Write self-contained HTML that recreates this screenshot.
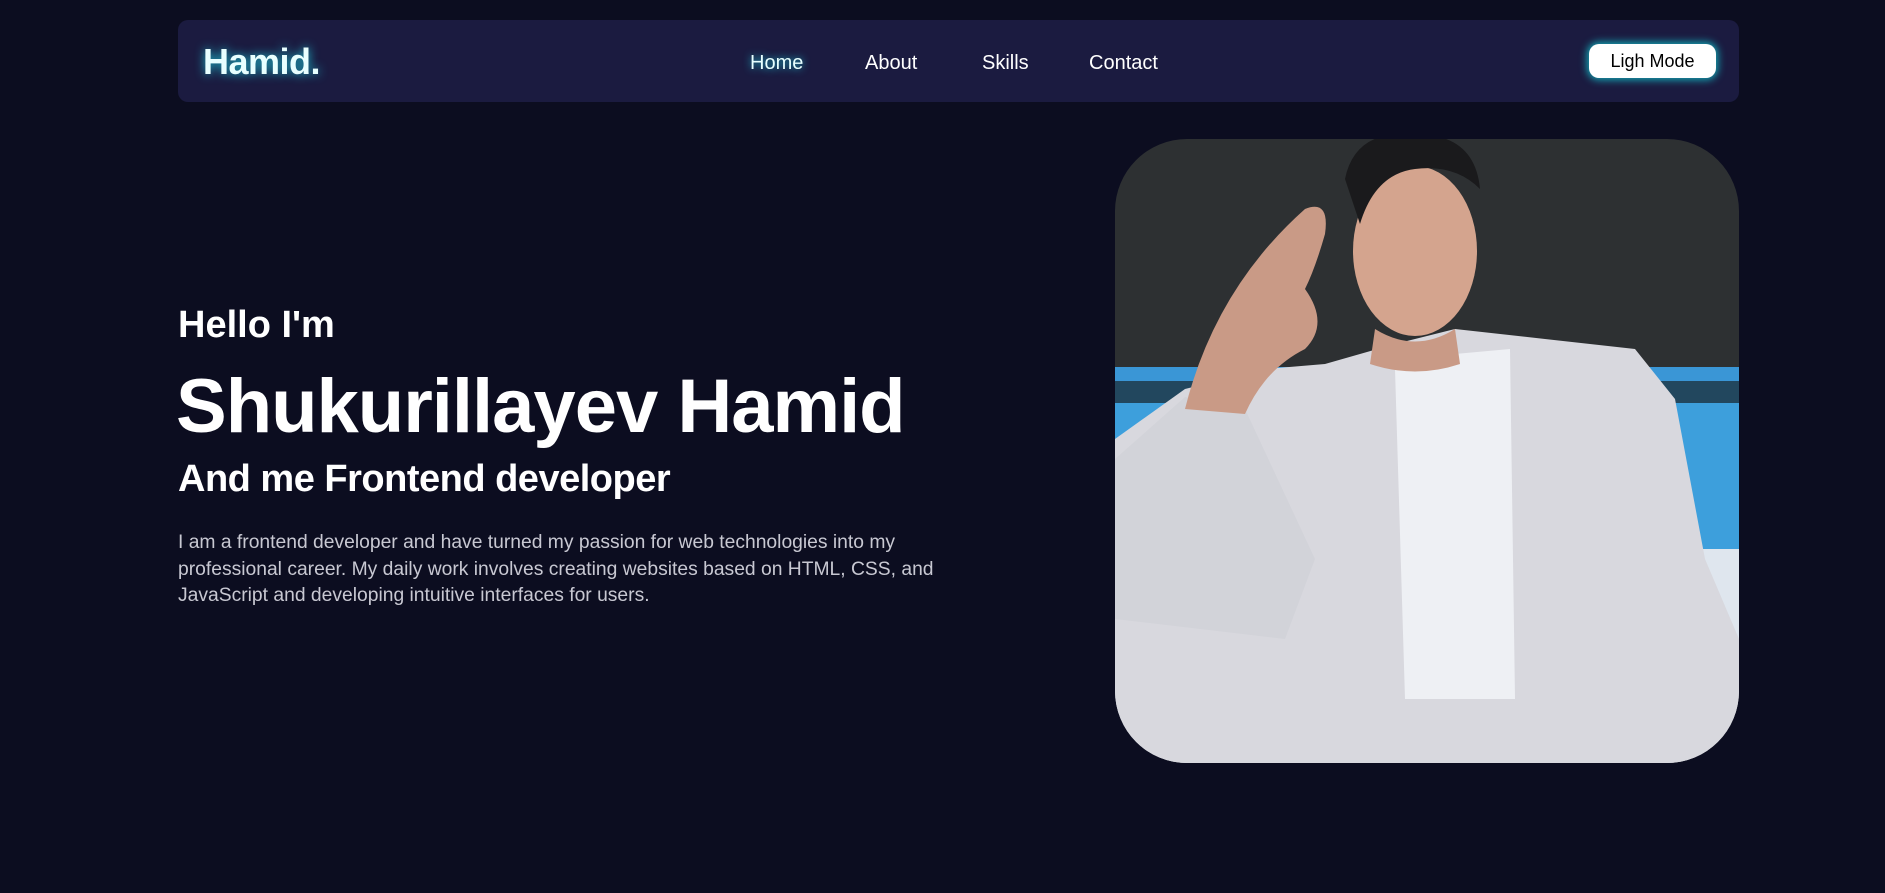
<!DOCTYPE html>
<html><head><meta charset="utf-8"><style>
*{margin:0;padding:0;box-sizing:border-box}
html,body{width:1885px;height:893px;background:#0c0d20;overflow:hidden;font-family:"Liberation Sans",sans-serif;color:#fff}
nav{position:absolute;left:178px;top:20px;width:1561px;height:82px;background:#1b1b40;border-radius:10px}
.logo{position:absolute;left:25px;top:21px;font-size:36px;font-weight:bold;color:#e8ffff;text-shadow:0 0 10px #1fc6d6;letter-spacing:-0.5px}
.links a{position:absolute;top:32px;font-size:20px;color:#fff;text-decoration:none}
.btn{position:absolute;left:1411px;top:24px;width:127px;height:34px;background:#fff;color:#000;border-radius:10px;font-size:18px;text-align:center;line-height:34px;box-shadow:0 0 8px 2px #14a7b5}
h2.hello{position:absolute;left:178px;top:304px;font-size:38px;font-weight:bold}
h1{position:absolute;left:176px;top:363px;font-size:76px;font-weight:bold;letter-spacing:-1px}
h3{position:absolute;left:178px;top:458px;font-size:38px;font-weight:bold;letter-spacing:-0.5px}
p{position:absolute;left:178px;top:530px;width:800px;font-size:19.3px;line-height:26.5px;color:#c8c8d2}
.photo{position:absolute;left:1115px;top:139px;width:624px;height:624px;border-radius:72px;overflow:hidden}
</style></head><body>
<nav>
<div class="logo">Hamid.</div>
<div class="links">
<a style="left:572px;text-shadow:0 0 8px #1fc6d6;color:#e8ffff">Home</a>
<a style="left:687px">About</a>
<a style="left:804px">Skills</a>
<a style="left:911px">Contact</a>
</div>
<div class="btn">Ligh Mode</div>
</nav>
<h2 class="hello">Hello I'm</h2>
<h1>Shukurillayev Hamid</h1>
<h3>And me Frontend developer</h3>
<p>I am a frontend developer and have turned my passion for web technologies into my professional career. My daily work involves creating websites based on HTML, CSS, and JavaScript and developing intuitive interfaces for users.</p>
<div class="photo">
<svg width="624" height="624" viewBox="0 0 624 624">
<rect width="624" height="624" fill="#2d3032"/>
<rect y="228" width="624" height="14" fill="#3a96d6"/>
<rect y="242" width="624" height="22" fill="#22475e"/>
<rect y="264" width="624" height="160" fill="#3d9fdc"/>
<rect y="410" width="624" height="214" fill="#dfe6ee"/>
<path d="M0 300 L70 250 L150 230 L210 225 L280 205 L340 190 L430 200 L520 210 L560 260 L590 420 L624 500 L624 624 L0 624 Z" fill="#d8d8de"/>
<path d="M280 230 L340 215 L395 210 L400 560 L290 560 Z" fill="#eef0f4"/>
<path d="M0 320 L70 258 L130 270 L200 420 L170 500 L0 480 Z" fill="#d2d3d9"/>
<path d="M70 270 Q100 150 190 70 Q215 60 210 95 Q200 130 190 150 Q215 185 190 210 Q150 230 130 275 Z" fill="#c99a86"/>
<ellipse cx="300" cy="112" rx="62" ry="85" fill="#d4a48e"/>
<path d="M230 40 Q240 -10 300 -5 Q360 -5 365 50 Q340 25 300 30 Q260 35 245 85 Z" fill="#1a1a1c"/>
<path d="M260 190 Q300 215 340 190 L345 225 Q300 240 255 225 Z" fill="#c99a86"/>
</svg>
</div>
</body></html>
